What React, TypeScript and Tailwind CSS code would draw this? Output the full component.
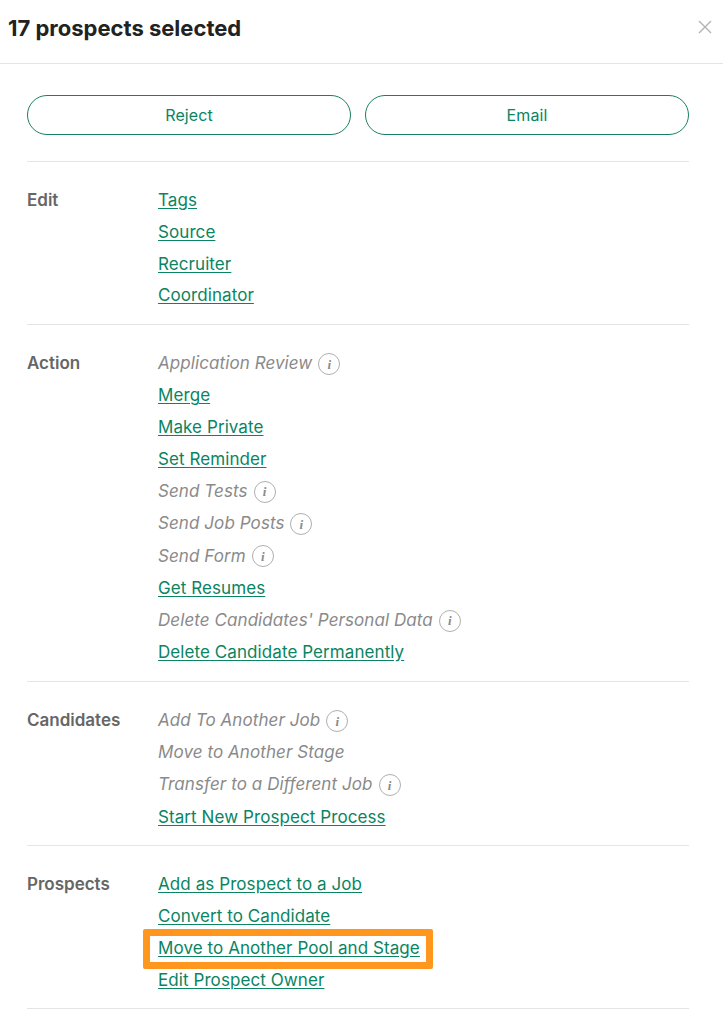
import React from "react";

const I = () => (
  <span className="ml-[6px] inline-flex h-[22px] w-[22px] items-center justify-center rounded-full border border-[#b0b0b0] text-[13px] italic leading-none text-[#8a8a8a] [font-family:'Liberation_Serif',serif] font-bold">i</span>
);
const L = ({ t }: { t: string }) => (
  <div className="flex h-[31.75px] items-center"><a className="cursor-pointer text-[#0a8462] underline underline-offset-2">{t}</a></div>
);
const D = ({ t }: { t: string }) => (
  <div className="flex h-[32.35px] items-center italic text-[#8a8a8a]">{t}<I /></div>
);
const N = ({ t }: { t: string }) => (
  <div className="flex h-[31.75px] items-center italic text-[#8a8a8a]">{t}</div>
);
const Section = ({ title, children, tall }: { title: string; children: React.ReactNode; tall?: boolean }) => (
  <div className={tall ? "flex border-b border-[#e4e4e4] pb-[12.5px] pt-[23px]" : "flex border-b border-[#e4e4e4] pb-[12px] pt-[23px]"}>
    <div className="flex h-[32px] w-[131px] items-center font-semibold tracking-normal text-[#666]">{title}</div>
    <div className="flex flex-col">{children}</div>
  </div>
);

export default function App() {
  return (
    <div className="h-[1015px] w-[723px] overflow-hidden bg-white text-[17px] tracking-[0.08px] [font-family:Inter,sans-serif]">
      <div className="flex h-[64px] items-center justify-between border-b border-[#e4e4e4] pl-[8px] pr-[10px]">
        <div className="pb-[7px] text-[22px] font-bold tracking-normal text-[#222]">17 prospects selected</div>
        <svg width="16" height="16" viewBox="0 0 16 16" className="mb-[10px]" stroke="#b0b0b0" strokeWidth="1.3" fill="none"><path d="M2 2 L14 14 M14 2 L2 14" /></svg>
      </div>
      <div className="pl-[27px] pr-[34px]">
        <div className="flex gap-[14px] border-b border-[#e4e4e4] pb-[26px] pt-[31px]">
          <button className="h-[40px] flex-1 rounded-full border border-[#1a7f62] text-[16px] text-[#0a8462]">Reject</button>
          <button className="h-[40px] flex-1 rounded-full border border-[#1a7f62] text-[16px] text-[#0a8462]">Email</button>
        </div>
        <Section title="Edit"><L t="Tags" /><L t="Source" /><L t="Recruiter" /><L t="Coordinator" /></Section>
        <Section title="Action" tall>
          <D t="Application Review" /><L t="Merge" /><L t="Make Private" /><L t="Set Reminder" /><D t="Send Tests" /><D t="Send Job Posts" /><D t="Send Form" /><L t="Get Resumes" /><D t="Delete Candidates' Personal Data" /><L t="Delete Candidate Permanently" />
        </Section>
        <Section title="Candidates">
          <D t="Add To Another Job" /><N t="Move to Another Stage" /><D t="Transfer to a Different Job" /><L t="Start New Prospect Process" />
        </Section>
        <Section title="Prospects">
          <L t="Add as Prospect to a Job" /><L t="Convert to Candidate" />
          <div className="relative"><L t="Move to Another Pool and Stage" /><div className="absolute -left-[15px] -top-[4px] h-[40px] w-[290px] rounded-[2px] border-[7px] border-[#ff961e]" /></div>
          <L t="Edit Prospect Owner" />
        </Section>
      </div>
    </div>
  );
}
